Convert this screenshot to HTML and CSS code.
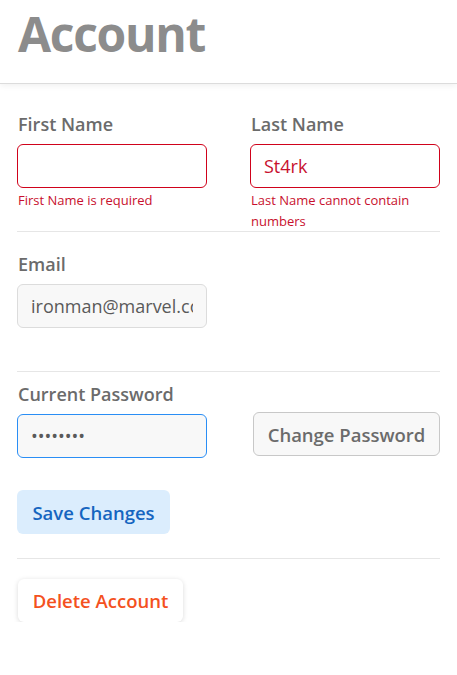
FILE: index.html
```html
<!DOCTYPE html>
<html lang="en">
<head>
<meta charset="utf-8">
<title>Account</title>
<link rel="stylesheet" href="styles.css">
</head>
<body>
<header class="topbar">
  <h1 class="title">Account</h1>
</header>
<main class="content">
  <section class="row two-col">
    <div class="field">
      <label class="label" for="first">First Name</label>
      <input id="first" class="input invalid" type="text" value="">
      <div class="error">First Name is required</div>
    </div>
    <div class="field">
      <label class="label" for="last">Last Name</label>
      <input id="last" class="input invalid" type="text" value="St4rk">
      <div class="error">Last Name cannot contain numbers</div>
    </div>
  </section>
  <hr class="sep">
  <section class="row email-row">
    <div class="field">
      <label class="label" for="email">Email</label>
      <input id="email" class="input muted" type="text" value="ironman@marvel.com" readonly>
      <div class="error"></div>
    </div>
  </section>
  <hr class="sep">
  <section class="row pw-row">
    <div class="field">
      <label class="label" for="pw">Current Password</label>
      <input id="pw" class="input muted focused" type="password" value="password">
    </div>
    <div class="pw-action">
      <button class="btn btn-gray" type="button">Change Password</button>
    </div>
  </section>
  <div class="save-wrap">
    <button class="btn btn-save" type="button">Save Changes</button>
  </div>
  <hr class="sep">
  <div class="delete-wrap">
    <button class="btn btn-delete" type="button">Delete Account</button>
  </div>
</main>
</body>
</html>
```

FILE: styles.css
```css
* { box-sizing: border-box; }
html, body { margin: 0; padding: 0; background: #fff; }
body {
  font-family: "Open Sans", "Noto Sans", "Liberation Sans", sans-serif;
  color: #6b6b6b;
}
.topbar {
  height: 84px;
  border-bottom: 1px solid #dcdcdc;
  box-shadow: 0 2px 6px rgba(0,0,0,0.06);
  padding: 0 18px;
  display: flex;
  align-items: flex-start;
}
.title {
  margin: 0;
  margin-top: 2px;
  font-size: 48px;
  font-weight: 700;
  color: #8c8c8c;
  line-height: 64px;
  letter-spacing: -1.3px;
}
.content {
  padding: 28px 17px 0 17px;
}
.two-col {
  display: grid;
  grid-template-columns: 190px 190px;
  column-gap: 43px;
}
.field { display: flex; flex-direction: column; }
.label {
  font-size: 18px;
  font-weight: 600;
  line-height: 24px;
  color: #6b6b6b;
  margin-bottom: 8px;
  padding-left: 1px;
}
.input {
  width: 190px;
  height: 44px;
  border: 1px solid #dcdcdc;
  border-radius: 6px;
  padding: 0 13px;
  font-family: inherit;
  font-size: 18px;
  color: #555;
  background: #fff;
  outline: none;
}
.invalid { border-color: #d0021b; color: #c8102e; }
.muted { background: #f8f8f8; color: #5a5a5a; }
.focused { border-color: #2a8ef5; }
.error {
  height: 21px;
  margin-top: 2px;
  font-size: 13px;
  line-height: 21px;
  color: #c8102e;
  overflow: visible;
  padding-left: 1px;
}
.sep {
  border: 0;
  border-top: 1px solid #e6e6e6;
  margin: 20px 0 0 0;
}
.email-row { margin-top: 20px; }
.pw-row {
  margin-top: 10px;
  display: grid;
  grid-template-columns: 190px 1fr;
  column-gap: 46px;
  align-items: end;
}
.pw-action { padding-bottom: 2px; }
.btn {
  font-family: inherit;
  font-size: 18.5px;
  font-weight: 600;
  height: 44px;
  border-radius: 6px;
  padding: 0 13px;
  cursor: pointer;
}
.btn-gray {
  width: 187px;
  background: #f8f8f8;
  border: 1px solid #c8c8c8;
  color: #6b6b6b;
}
.save-wrap { margin-top: 32px; }
.btn-save {
  background: #dbedfd;
  border: 0;
  color: #1565c0;
  width: 153px;
}
.save-wrap + .sep { margin-top: 24px; }
.delete-wrap { margin-top: 20px; padding-left: 1px; }
.btn-delete {
  background: #fff;
  border: 0;
  color: #f4511e;
  width: 165px;
  height: 43px;
  box-shadow: 0 1px 5px rgba(0,0,0,0.15);
}
```
